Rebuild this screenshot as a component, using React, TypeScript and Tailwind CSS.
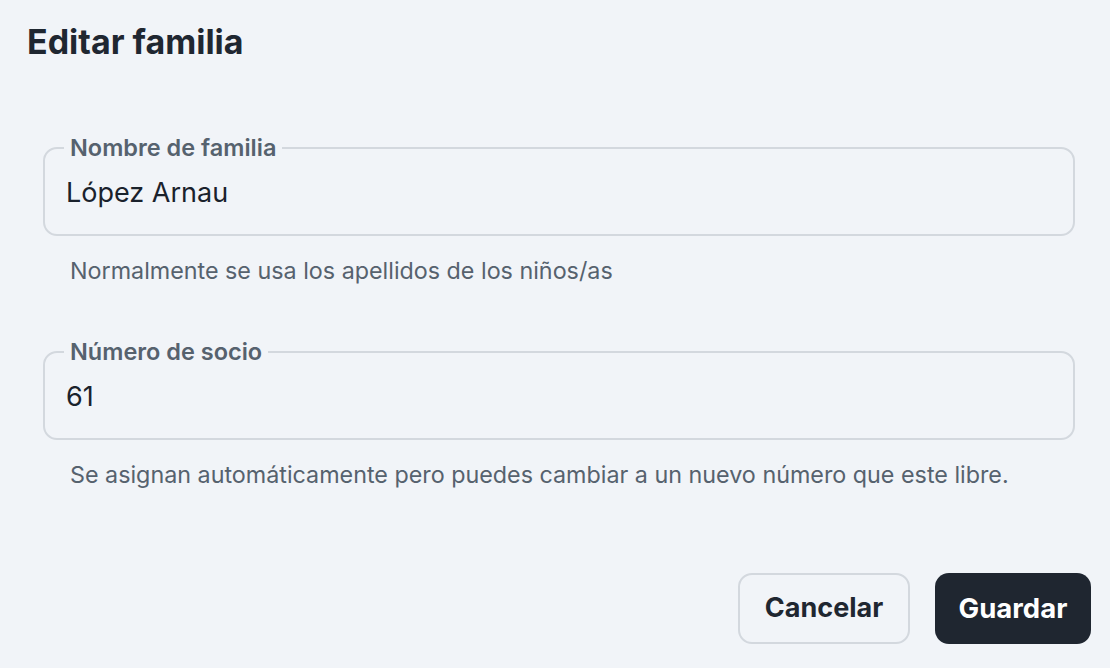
import React from "react";

function Field({ label, value, help }: { label: string; value: string; help: string }) {
  return (
    <div className="mx-4">
      <fieldset className="border-2 border-[#d3d8de] rounded-[14px] pl-[19px] pr-4 pb-[23px] pt-0 m-0">
        <legend className="px-[6px] text-[23.5px] leading-[28px] font-semibold text-[#56626e]">{label}</legend>
        <input
          className="block w-full bg-transparent outline-none text-[27px] leading-[36px] text-[#1a222c] pl-[2px] mt-[13px]"
          defaultValue={value}
          readOnly
        />
      </fieldset>
      <p className="mt-[21px] ml-[27px] text-[23.3px] leading-[28px] text-[#56626e]">{help}</p>
    </div>
  );
}

export default function App() {
  return (
    <div className="w-[1110px] h-[668px] bg-[#f1f4f8] pl-[27px] pr-[19px] pt-[22px]" style={{ fontFamily: "Inter, 'Noto Sans', sans-serif" }}>
      <h1 className="text-[34px] leading-[40px] font-bold text-[#1f2731]">Editar familia</h1>
      <div className="mt-[72px] flex flex-col gap-[53px]">
        <Field label="Nombre de familia" value="López Arnau" help="Normalmente se usa los apellidos de los niños/as" />
        <Field label="Número de socio" value="61" help="Se asignan automáticamente pero puedes cambiar a un nuevo número que este libre." />
      </div>
      <div className="mt-[84px] flex justify-end gap-[25px]">
        <button className="h-[71px] w-[172px] rounded-[14px] border-2 border-[#d3d8de] text-[27px] font-bold text-[#1f2731]">Cancelar</button>
        <button className="h-[71px] w-[156px] rounded-[14px] bg-[#1f2630] text-[27.5px] font-bold text-white">Guardar</button>
      </div>
    </div>
  );
}
